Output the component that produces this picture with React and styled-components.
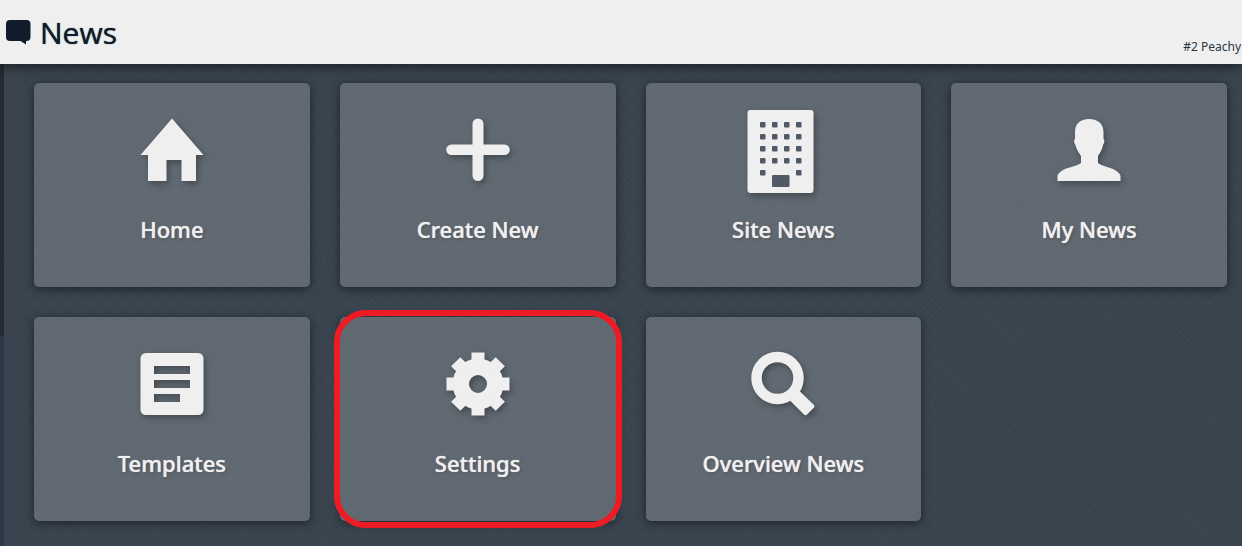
import React from 'react';
import styled, { createGlobalStyle, css } from 'styled-components';

const GlobalStyle = createGlobalStyle`
  * {
    box-sizing: border-box;
  }

  body {
    margin: 0;
    background: #39444f;
    font-family: "Noto Sans", "Open Sans", sans-serif;
  }
`;

const Page = styled.div`
  display: flex;
  flex-direction: column;
  min-height: 100vh;
`;

const Header = styled.header`
  position: relative;
  z-index: 1;
  display: flex;
  align-items: flex-end;
  justify-content: space-between;
  height: 64px;
  padding: 0 1px 8px 6px;
  background: #efefef;
  color: #101c2b;
  box-shadow: 0 2px 12px rgba(0, 0, 0, 0.6);
`;

const Title = styled.h1`
  display: flex;
  align-items: center;
  gap: 9px;
  margin: 0;
  font-family: "Open Sans", sans-serif;
  font-size: 30px;
  font-weight: 400;
  line-height: 46px;
  text-shadow: 0 0 1px currentColor;
`;

const UserName = styled.span`
  font-size: 12px;
  line-height: 18px;
  color: #2a3542;
`;

const Body = styled.div`
  display: flex;
  flex: 1;
`;

const SideEdge = styled.div`
  flex: 0 0 4px;
  background: linear-gradient(#262b33 272px, #2e3745 272px);
`;

const Main = styled.main`
  flex: 1;
  padding: 19px 15px 24px 30px;
  background:
    repeating-linear-gradient(45deg, rgba(0, 0, 0, 0.05) 0 1px, transparent 1px 4px),
    repeating-linear-gradient(-45deg, rgba(255, 255, 255, 0.02) 0 1px, transparent 1px 3px),
    #39444f;
`;

const TileGrid = styled.nav`
  display: grid;
  grid-template-columns: repeat(4, 1fr);
  gap: 30px;
`;

const Tile = styled.a`
  position: relative;
  display: flex;
  flex-direction: column;
  align-items: center;
  gap: 22px;
  padding: 25px 10px 43px;
  border-radius: 5px;
  background: rgba(255, 255, 255, 0.2);
  box-shadow: 0 2px 10px rgba(0, 0, 0, 0.5);
  color: #efefef;
  text-decoration: none;

  ${({ $marked }) => $marked && css`
    &::after {
      content: "";
      position: absolute;
      inset: -7px -6px;
      border: 6px solid #ed1c24;
      border-radius: 32px;
    }
  `}
`;

const TileIcon = styled.svg`
  width: 84px;
  height: 84px;
  fill: currentColor;
  filter: drop-shadow(2px 3px 3px rgba(0, 0, 0, 0.3));
`;

const TileLabel = styled.span`
  font-size: 22px;
  font-weight: 500;
  line-height: 30px;
  text-shadow: 0 0 1px currentColor, 1px 1px 3px rgba(0, 0, 0, 0.3);
`;

const HomeIcon = () => (
  <path d="M42 10.500L73.500 47H66V73H51.500V52H36.500V73H18V47H10.500Z" />
);

const PlusIcon = () => (
  <path d="M42 10.500a5.500 5.500 0 0 1 5.500 5.500V36.500H68.500a5 5 0 0 1 0 10.500H47.500V67.500a5.500 5.500 0 0 1-11 0V47H15.500a5 5 0 0 1 0-10.500H36.500V16a5.500 5.500 0 0 1 5.500-5.500Z" />
);

const BuildingIcon = () => (
  <>
    <rect x="6.500" y="2" width="66" height="83" rx="3" />
    <g fill="#515b67">
      {[14, 26, 38, 50, 62].map((y) =>
        [19, 31, 43, 55]
          .filter((x) => y < 62 || x === 19 || x === 55)
          .map((x) => <rect key={`${x}-${y}`} x={x} y={y} width="5.500" height="5.500" rx="1" />)
      )}
      <rect x="31" y="67" width="17.500" height="12" rx="1" />
    </g>
  </>
);

const PersonIcon = () => (
  <path d="M42 11C51 11 56.500 16 56.500 24V31C57.800 31 57.500 35.500 56 37C55.500 41 53.500 44 51 48V55C56 58.500 63 59 68 62Q73.500 65.500 73.500 68V73H10.500V68Q10.500 65.500 16 62C21 59 29 58.500 34 55V48C31.500 44 29 41 28.500 37C27 35.500 26.700 31 28 31V24C28 16 33 11 42 11Z" />
);

const TemplateIcon = () => (
  <path
    fillRule="evenodd"
    d="M16 11H68a5.500 5.500 0 0 1 5.500 5.500V67.500a5.500 5.500 0 0 1-5.500 5.500H16a5.500 5.500 0 0 1-5.500-5.500V16.500a5.500 5.500 0 0 1 5.500-5.500ZM24 24V32H60V24ZM24 38V46H60V38ZM24 52V60H50V52Z"
  />
);

const GearIcon = () => (
  <>
    <path fillRule="evenodd" d="M42 16.500a25.500 25.500 0 1 0 0 51a25.500 25.500 0 1 0 0-51ZM42 33a9 9 0 1 1 0 18a9 9 0 1 1 0-18Z" />
    {[0, 45, 90, 135, 180, 225, 270, 315].map((angle) => (
      <rect key={angle} x="35.500" y="10.500" width="13" height="12" transform={`rotate(${angle} 42 42)`} />
    ))}
  </>
);

const SearchIcon = () => (
  <>
    <circle cx="36.500" cy="36" r="21" fill="none" stroke="currentColor" strokeWidth="10.500" />
    <path d="M49 58.500L58.500 49L73 63Q74 64 73 65.500L66 72.500Q64.500 74 63 72.500Z" />
  </>
);

const tiles = [
  { label: 'Home', icon: HomeIcon },
  { label: 'Create New', icon: PlusIcon },
  { label: 'Site News', icon: BuildingIcon },
  { label: 'My News', icon: PersonIcon },
  { label: 'Templates', icon: TemplateIcon },
  { label: 'Settings', icon: GearIcon, marked: true },
  { label: 'Overview News', icon: SearchIcon },
];

export default function App() {
  return (
    <Page>
      <GlobalStyle />
      <Header>
        <Title>
          <svg width="25" height="26" viewBox="0 0 25 26" fill="currentColor" aria-hidden="true">
            <path d="M4 0H20.500Q24.500 0 24.500 4V17Q24.500 21 20.500 21H20V24.500L14.500 21H4Q0 21 0 17V4Q0 0 4 0Z" />
          </svg>
          News
        </Title>
        <UserName>#2 Peachy</UserName>
      </Header>
      <Body>
        <SideEdge />
        <Main>
          <TileGrid>
            {tiles.map(({ label, icon: Icon, marked }) => (
              <Tile key={label} href="#" $marked={marked}>
                <TileIcon viewBox="0 0 84 84" overflow="visible" aria-hidden="true">
                  <Icon />
                </TileIcon>
                <TileLabel>{label}</TileLabel>
              </Tile>
            ))}
          </TileGrid>
        </Main>
      </Body>
    </Page>
  );
}
